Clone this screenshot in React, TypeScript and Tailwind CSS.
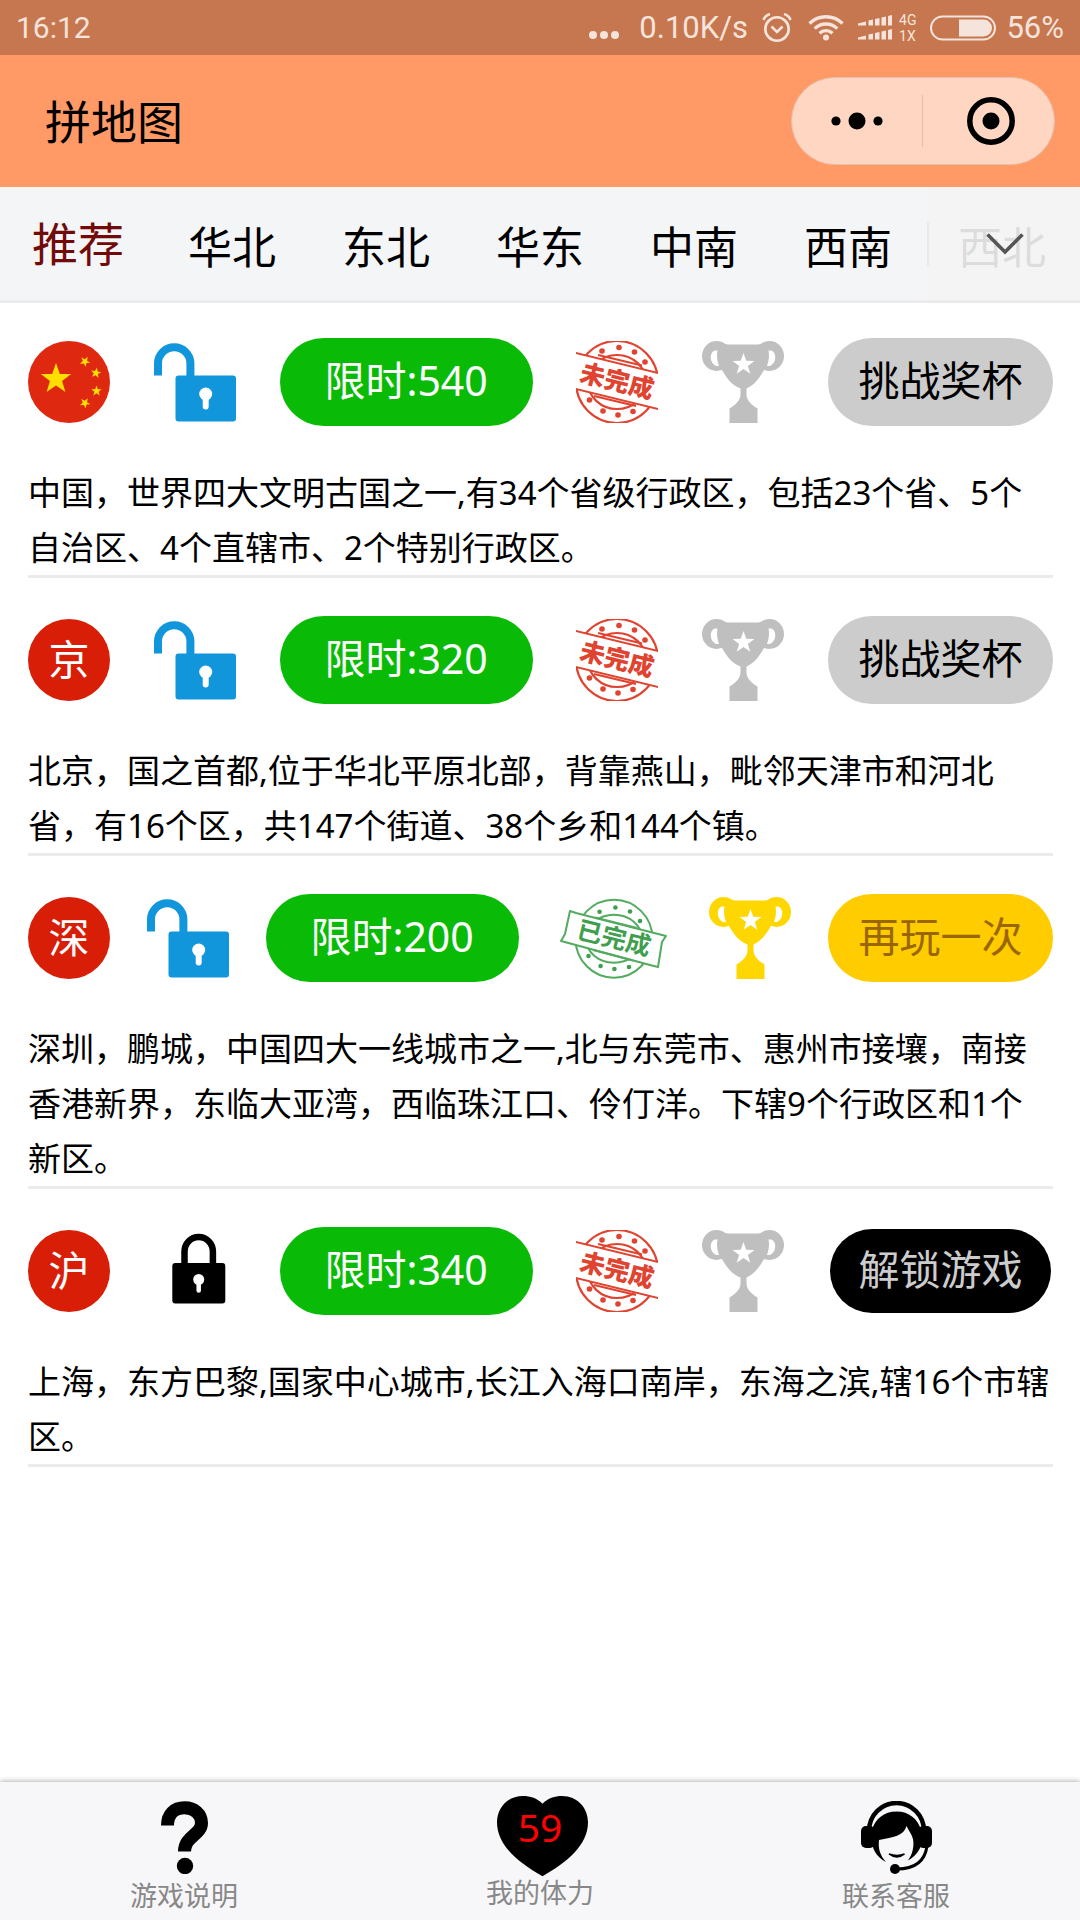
import React, { useState } from 'react';

type Status = 'open' | 'done' | 'locked';

interface Level {
    id: string;
    badge: string | null;
    seconds: number;
    status: Status;
    description: string;
}

const REGIONS = ['推荐', '华北', '东北', '华东', '中南', '西南', '西北'];

const LEVELS: Level[] = [
    {
        id: 'china',
        badge: null,
        seconds: 540,
        status: 'open',
        description: '中国，世界四大文明古国之一,有34个省级行政区，包括23个省、5个自治区、4个直辖市、2个特别行政区。',
    },
    {
        id: 'beijing',
        badge: '京',
        seconds: 320,
        status: 'open',
        description: '北京，国之首都,位于华北平原北部，背靠燕山，毗邻天津市和河北省，有16个区，共147个街道、38个乡和144个镇。',
    },
    {
        id: 'shenzhen',
        badge: '深',
        seconds: 200,
        status: 'done',
        description: '深圳，鹏城，中国四大一线城市之一,北与东莞市、惠州市接壤，南接香港新界，东临大亚湾，西临珠江口、伶仃洋。下辖9个行政区和1个新区。',
    },
    {
        id: 'shanghai',
        badge: '沪',
        seconds: 340,
        status: 'locked',
        description: '上海，东方巴黎,国家中心城市,长江入海口南岸，东海之滨,辖16个市辖区。',
    },
];

const ACTIONS: Record<Status, { label: string; className: string }> = {
    open: { label: '挑战奖杯', className: 'w-[225px] h-[88px] bg-[#cccccc] text-black' },
    done: { label: '再玩一次', className: 'w-[225px] h-[88px] bg-[#ffcc00] text-[#996600]' },
    locked: { label: '解锁游戏', className: 'w-[221px] h-[84px] mx-0.5 bg-black text-[#cccccc]' },
};

const STAR = '0,-10 2.4,-3.2 9.5,-3.1 3.8,1.2 5.9,8.1 0,4 -5.9,8.1 -3.8,1.2 -9.5,-3.1 -2.4,-3.2';

const StatusBar: React.FC = () => (
    <div className="h-[55px] px-4 flex items-center justify-between bg-[#c6774f] text-[#f5e4db] leading-none font-['Roboto',sans-serif]">
        <span className="text-[30px]">16:12</span>
        <div className="flex items-center text-[31px]">
            <svg className="w-8 h-[30px] mr-[19px]" viewBox="0 0 32 30" fill="currentColor">
                <circle cx="5" cy="22" r="4" />
                <circle cx="16" cy="22" r="4" />
                <circle cx="27" cy="22" r="4" />
            </svg>
            <span>0.10K/s</span>
            <svg className="w-[30px] h-[30px] ml-3.5" viewBox="0 0 30 30" fill="none" stroke="currentColor" strokeWidth="2.6">
                <circle cx="15" cy="16" r="11.7" />
                <path d="M1.5 7C2.5 4 5 2 8 1.1M28.5 7C27.5 4 25 2 22 1.1" />
                <path d="M9.5 13.5L15 19L20.5 13.5" />
            </svg>
            <svg className="w-9 h-[30px] ml-4" viewBox="0 0 36 30" fill="none" stroke="currentColor" strokeWidth="3.4">
                <path d="M1.5 10.5A23.5 23.5 0 0 1 34.5 10.5" />
                <path d="M6.7 15.6A16 16 0 0 1 29.3 15.6" />
                <path d="M11.5 20.2A9.5 9.5 0 0 1 24.5 20.2" />
                <circle cx="18" cy="24.5" r="3" fill="currentColor" stroke="none" />
            </svg>
            <svg className="w-[34px] h-[30px] ml-3.5" viewBox="0 0 34 30" fill="currentColor">
                <path d="M0 10.5L8 8.5V12.5H0ZM10.5 7.5L15 6.5V12.5H10.5ZM17 6L21.5 5V12.5H17ZM23.5 4.5L28 3.5V12.5H23.5ZM30 3L34 2V12.5H30Z" />
                <path d="M0 24.5L8 22.5V26.5H0ZM10.5 21.5L15 20.5V26.5H10.5ZM17 20L21.5 19V26.5H17ZM23.5 18.5L28 17.5V26.5H23.5ZM30 17L34 16V26.5H30Z" />
            </svg>
            <span className="ml-[7px] flex flex-col text-[14px] leading-4">
                <span>4G</span>
                <span>1X</span>
            </span>
            <svg className="w-[66px] h-[26px] ml-3.5" viewBox="0 0 66 26" fill="none" stroke="currentColor" strokeWidth="2">
                <rect x="1" y="1.5" width="64" height="23" rx="11.5" />
                <path d="M29 4.5H53.5A8.5 8.5 0 0 1 53.5 21.5H29Z" fill="currentColor" stroke="none" />
            </svg>
            <span className="ml-2.5">56%</span>
        </div>
    </div>
);

const TitleBar: React.FC = () => (
    <header className="h-[132px] pl-[45px] pr-[25px] flex items-center justify-between bg-[#ff9966]">
        <h1 className="text-[46px] leading-none">拼地图</h1>
        <div className="w-[264px] h-[88px] flex items-center rounded-full border border-[#e6bfab] bg-[#ffd6c2]">
            <button aria-label="更多" className="w-[130px] flex justify-center">
                <svg className="w-[54px] h-5" viewBox="0 0 54 20">
                    <circle cx="6" cy="10" r="4.6" />
                    <circle cx="27" cy="10" r="8.5" />
                    <circle cx="48" cy="10" r="4.6" />
                </svg>
            </button>
            <span className="w-px h-[52px] bg-[#e6bfab]"></span>
            <button aria-label="关闭" className="flex-1 pl-1 flex justify-center">
                <svg className="w-12 h-12" viewBox="0 0 48 48">
                    <circle cx="24" cy="24" r="21.2" fill="none" stroke="black" strokeWidth="5.5" />
                    <circle cx="24" cy="24" r="8.5" />
                </svg>
            </button>
        </div>
    </header>
);

interface RegionTabsProps {
    active: string;
    onSelect: (region: string) => void;
}

const RegionTabs: React.FC<RegionTabsProps> = ({ active, onSelect }) => (
    <nav className="relative h-[113px] px-px flex overflow-x-clip bg-[#f4f5f7] shadow-[0_3px_0_#ebebeb]">
        {REGIONS.map((region) => (
            <button
                key={region}
                onClick={() => onSelect(region)}
                className={`w-[154px] shrink-0 leading-none ${region === active ? 'pb-0.5 text-[46px] text-[#730a0a]' : 'pt-1.5 text-[44px]'}`}
            >
                {region}
            </button>
        ))}
        <button aria-label="展开" className="absolute inset-y-0 right-0 w-[153px] flex items-center bg-[#f4f4f4]/90">
            <span className="w-0.5 h-11 bg-[#e9e9e9]"></span>
            <svg className="w-[38px] h-[22px] mx-auto" viewBox="0 0 38 22" fill="none" stroke="#555555" strokeWidth="3.6">
                <path d="M1.5 1.5L19 19L36.5 1.5" />
            </svg>
        </button>
    </nav>
);

const FlagIcon: React.FC = () => (
    <svg className="w-[82px] h-[82px]" viewBox="0 0 82 82">
        <circle cx="41" cy="41" r="41" fill="#de2910" />
        <g fill="#ffde00">
            <polygon points={STAR} transform="translate(28 38) scale(1.6)" />
            <polygon points={STAR} transform="translate(57 20.5) rotate(30) scale(.55)" />
            <polygon points={STAR} transform="translate(68 32) rotate(10) scale(.55)" />
            <polygon points={STAR} transform="translate(68.5 50) scale(.55)" />
            <polygon points={STAR} transform="translate(57 62) rotate(30) scale(.55)" />
        </g>
    </svg>
);

const OpenLockIcon: React.FC = () => (
    <svg className="w-[82px] h-[82px]" viewBox="0 0 82 82">
        <path d="M4 34.5V22.5A16.2 16.2 0 0 1 36.4 22.5V36" fill="none" stroke="#1296db" strokeWidth="8" />
        <rect x="21.5" y="34.5" width="60.5" height="46" rx="3" fill="#1296db" />
        <circle cx="51.7" cy="53" r="6.5" fill="white" />
        <path d="M51.7 54V65.5" stroke="white" strokeWidth="6" strokeLinecap="round" />
    </svg>
);

const ClosedLockIcon: React.FC = () => (
    <svg className="w-[82px] h-[82px]" viewBox="0 0 82 82">
        <path d="M30.5 35V21.5A14.2 14.6 0 0 1 58.9 21.5V35" fill="none" stroke="black" strokeWidth="6.5" />
        <rect x="18.3" y="33" width="53" height="40.5" rx="3" />
        <circle cx="44.7" cy="49.5" r="5.5" fill="white" />
        <path d="M44.7 50V60.5" stroke="white" strokeWidth="4.5" strokeLinecap="round" />
    </svg>
);

const PendingStamp: React.FC = () => (
    <svg className="w-[82px] h-[82px]" viewBox="0 0 82 82" role="img" aria-label="未完成">
        <g fill="none" stroke="#e0432f" strokeWidth="2.2">
            <circle cx="41" cy="41" r="41" />
            <ellipse cx="41" cy="41" rx="29" ry="27" />
        </g>
        <path d="M-2 11.5L84 32.5V68.5L-2 47.5Z" fill="white" />
        <path d="M-2 11.5L84 32.5M84 68.5L-2 47.5M22 14L66 24.5M18 55L60 65" fill="none" stroke="#e0432f" strokeWidth="2" />
        <g fill="#e0432f">
            <circle cx="26" cy="10" r="2.8" />
            <circle cx="43" cy="6.5" r="2.8" />
            <circle cx="58.5" cy="11" r="2.8" />
            <circle cx="69" cy="21" r="2.8" />
            <circle cx="13.5" cy="59" r="2.8" />
            <circle cx="27" cy="70" r="2.8" />
            <circle cx="42" cy="74" r="2.8" />
            <circle cx="57" cy="70.5" r="2.8" />
            <text x="41" y="49" fontSize="25" fontWeight="900" textAnchor="middle" transform="rotate(14 41 40)">未完成</text>
        </g>
    </svg>
);

const DoneStamp: React.FC = () => (
    <svg className="w-[117px] h-[82px]" viewBox="0 0 117 82" role="img" aria-label="已完成">
        <g fill="none" stroke="#53ab60" strokeWidth="2">
            <ellipse cx="59" cy="41.7" rx="38.5" ry="39" />
            <ellipse cx="59" cy="41.7" rx="28" ry="24" />
            <path d="M15 14L21 16L111 39L107 45L103 70L95 68L6 44L10 37Z" fill="white" strokeLinejoin="round" />
            <path d="M40 20.5L82 31M38 53L78 63.5" />
        </g>
        <g fill="#3f9f4e">
            <circle cx="44.6" cy="14.7" r="2.3" />
            <circle cx="60.4" cy="10.5" r="2.3" />
            <circle cx="75" cy="14.5" r="2.3" />
            <circle cx="85" cy="24" r="2.3" />
            <circle cx="33.5" cy="59" r="2.3" />
            <circle cx="45.6" cy="69" r="2.3" />
            <circle cx="59.4" cy="72" r="2.3" />
            <circle cx="74" cy="70" r="2.3" />
            <text x="59" y="50" fontSize="25" fontWeight="700" textAnchor="middle" transform="rotate(14 59 41)">已完成</text>
        </g>
    </svg>
);

const TrophyIcon: React.FC<{ won: boolean }> = ({ won }) => (
    <svg className={`w-[82px] h-[82px] ${won ? 'text-[#ffd700]' : 'text-[#bfbfbf]'}`} viewBox="0 0 82 82">
        <g fill="currentColor">
            <ellipse cx="14.5" cy="15" rx="14.5" ry="15" />
            <ellipse cx="67.5" cy="15" rx="14.5" ry="15" />
            <path d="M18 2L26 3.5H56L64 2L62 29C57 38 51 45 44.5 47.5V53C44.5 60 50 64 55.5 67.5V82H27.5V67.5C33 64 38.5 60 38.5 53V47.5C31 45 25 38 20 29Z" />
        </g>
        <g fill="white">
            <path d="M12.5 9.5C7 12 7.5 22 14 25H17C15 20 14.5 14 15.5 9.5Z" />
            <path d="M69.5 9.5C75 12 74.5 22 68 25H65C67 20 67.5 14 66.5 9.5Z" />
            <polygon points={STAR} transform="translate(41.5 23.5) scale(1.15)" />
        </g>
    </svg>
);

const LevelRow: React.FC<{ level: Level }> = ({ level }) => {
    const action = ACTIONS[level.status];

    return (
        <li className="pt-[38px] border-b-[3px] border-[#ebebeb]">
            <div className="h-[88px] flex items-center justify-between">
                {level.badge ? (
                    <span className="w-[82px] h-[82px] pb-0.5 flex items-center justify-center rounded-full bg-[#d81e06] text-white text-[41px] leading-none">
                        {level.badge}
                    </span>
                ) : (
                    <FlagIcon />
                )}
                {level.status === 'locked' ? <ClosedLockIcon /> : <OpenLockIcon />}
                <button className="w-[253px] h-[88px] pb-[3px] rounded-full bg-[#09bb07] text-white text-[41px] leading-none">
                    限时:{level.seconds}
                </button>
                {level.status === 'done' ? <DoneStamp /> : <PendingStamp />}
                <TrophyIcon won={level.status === 'done'} />
                <button className={`pb-[3px] rounded-full text-[41px] leading-none ${action.className}`}>{action.label}</button>
            </div>
            <p className="mt-[39px] text-[33px] leading-[55px]">{level.description}</p>
        </li>
    );
};

const BottomBar: React.FC<{ energy: number }> = ({ energy }) => (
    <footer className="mt-auto h-[138px] px-1.5 grid grid-cols-3 bg-[#f7f7f9] text-[27px] leading-[30px] text-[#888888] shadow-[0_-1px_5px_rgba(0,0,0,0.3)]">
        <button className="pt-[19px] flex flex-col items-center">
            <svg className="w-[47px] h-[73px]" viewBox="0 0 47 73">
                <path d="M6.5 24.5C6.5 13 13.5 6.8 23.5 6.8C33.5 6.8 40.5 13 40.5 22C40.5 34 23.5 35 23.5 50.5" fill="none" stroke="black" strokeWidth="13" />
                <circle cx="24" cy="65" r="8.2" />
            </svg>
            <span className="mt-[7px]">游戏说明</span>
        </button>
        <button className="pt-[13px] flex flex-col items-center">
            <span className="relative pl-1">
                <svg className="w-[91px] h-[83px]" viewBox="0 0 93 83">
                    <path d="M46.5 8C41 2 34 0 26.5 0C11 0 0 12 0 27C0 50 21 68 46.5 82C72 68 93 50 93 27C93 12 82 0 66.5 0C59 0 52 2 46.5 8Z" fill="black" />
                </svg>
                <span className="absolute inset-x-0 top-[9px] text-center text-[39px] leading-[46px] text-[#ff0000]">{energy}</span>
            </span>
            <span>我的体力</span>
        </button>
        <button className="pt-[19px] flex flex-col items-center">
            <svg className="w-[71px] h-[73px]" viewBox="0 0 71 73">
                <path d="M8 30A27.5 28 0 0 1 63 30" fill="none" stroke="black" strokeWidth="4.5" />
                <rect x="0" y="25" width="14" height="22" rx="5" />
                <rect x="57" y="25" width="14" height="22" rx="5" />
                <path d="M11 29C14 18 23 10.5 35.5 10.5C48 10.5 57 18 60 29V45C57 52 53 56 47 59.5C51 54 53.5 46 52 38C50.5 33 48 30 45.5 25C43 35 32 36 18 39C17 48 19 54 25 61C15 56 11 47 11 40Z" />
                <path d="M28 53Q36 59 43.5 53Q36 56 28 53Z" stroke="black" strokeWidth="1.5" />
                <path d="M66 45C64 60 54 68 36 68" fill="none" stroke="black" strokeWidth="3" />
                <circle cx="34" cy="68" r="5" />
            </svg>
            <span className="mt-[7px]">联系客服</span>
        </button>
    </footer>
);

const App: React.FC = () => {
    const [region, setRegion] = useState(REGIONS[0]);

    return (
        <div lang="zh-CN" className="min-h-screen flex flex-col bg-white text-black font-['Noto_Sans','Noto_Sans_CJK_SC',sans-serif]">
            <StatusBar />
            <TitleBar />
            <RegionTabs active={region} onSelect={setRegion} />
            <ul className="pl-7 pr-[27px]">
                {LEVELS.map((level) => (
                    <LevelRow key={level.id} level={level} />
                ))}
            </ul>
            <BottomBar energy={59} />
        </div>
    );
};

export default App;
